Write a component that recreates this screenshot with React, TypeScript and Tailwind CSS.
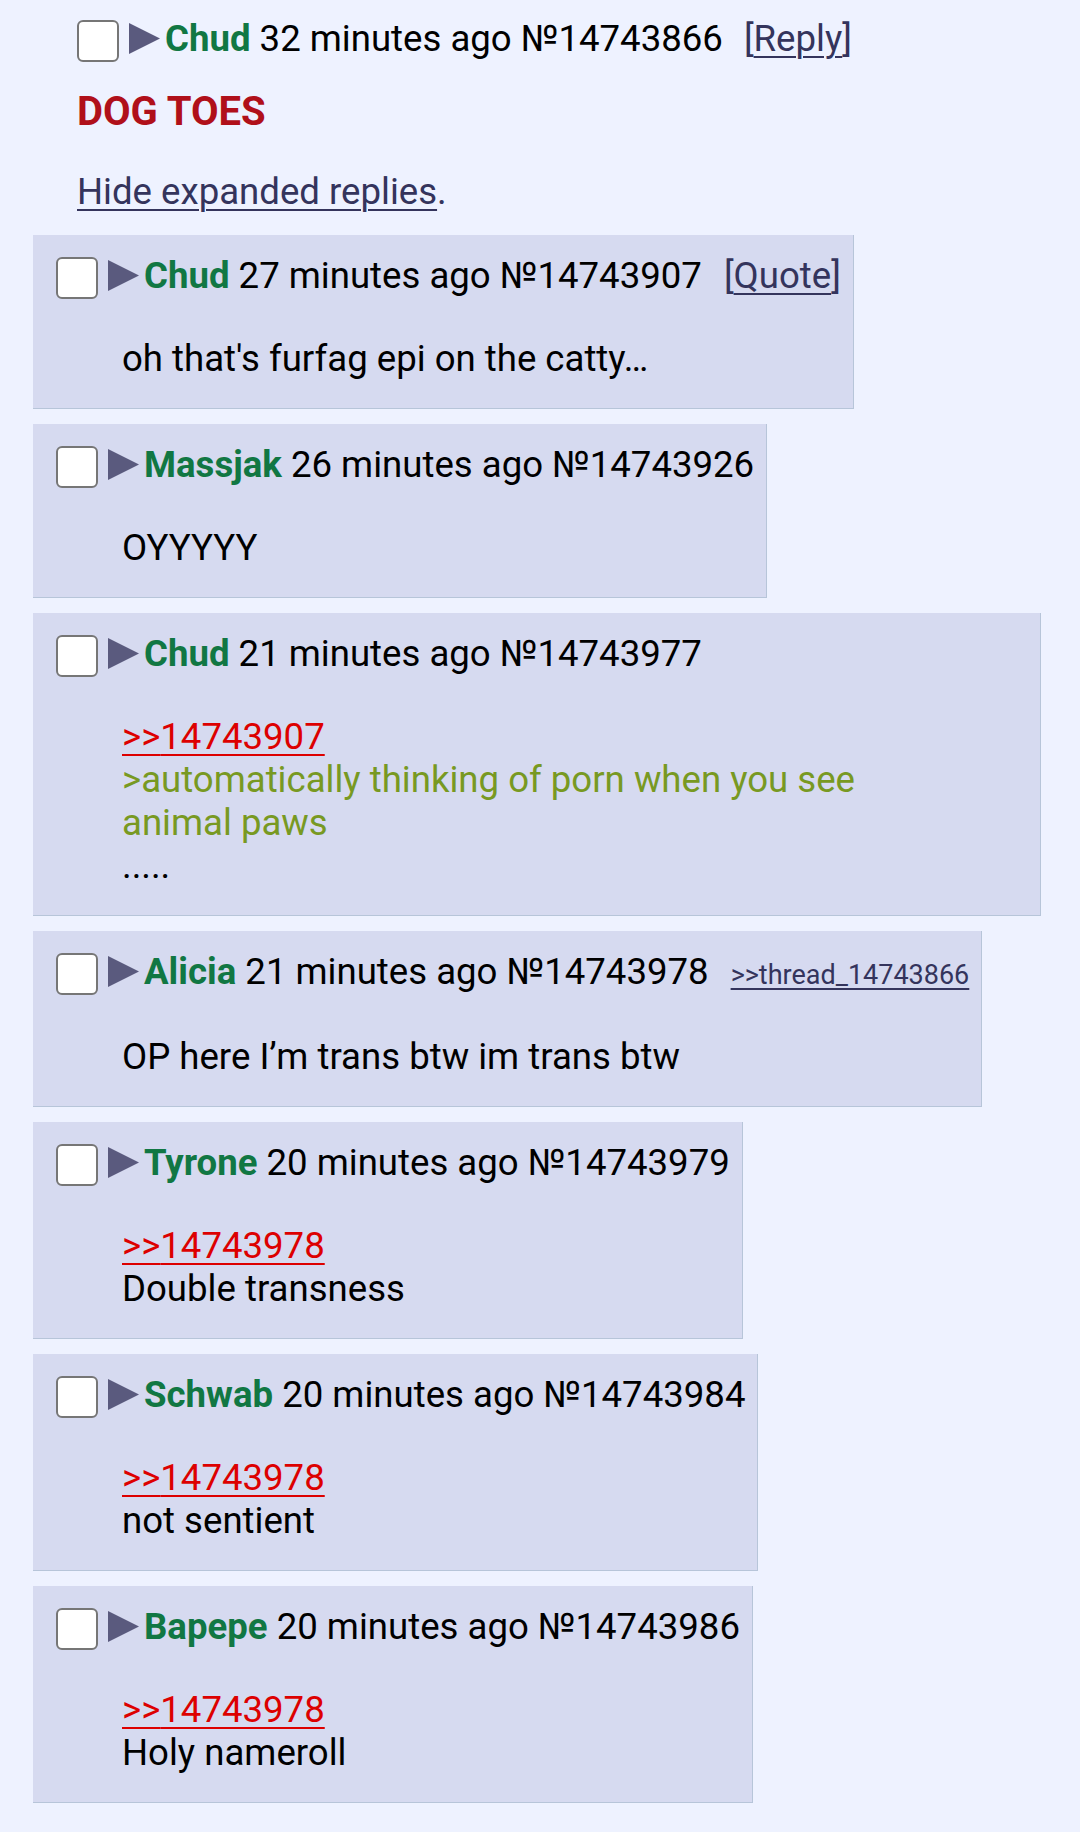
import type { ReactNode } from "react";

type Post = {
  name: string;
  time: string;
  no: string;
  extra?: ReactNode;
  body: ReactNode;
  width?: string;
};

const Checkbox = () => (
  <div className="mt-[3px] h-[42px] w-[42px] shrink-0 rounded-[6px] border-2 border-[#767676] bg-white" />
);

const Arrow = () => (
  <svg className="ml-[10px] mt-[6px] shrink-0" width="31" height="31" viewBox="0 0 31 31">
    <polygon points="0,0 31,15.5 0,31" fill="#5a5a7e" />
  </svg>
);

const Quote = ({ to }: { to: string }) => (
  <div>
    <span className="text-[#d00] underline decoration-2 underline-offset-[5px]">&gt;&gt;{to}</span>
  </div>
);

function Header({ name, time, no, extra }: { name: string; time: string; no: string; extra?: ReactNode }) {
  return (
    <div className="flex items-start">
      <Checkbox />
      <Arrow />
      <div className="ml-[5px] whitespace-nowrap leading-[43px]">
        <span className="font-bold text-[#117743]">{name}</span> {time} №{no}
        {extra}
      </div>
    </div>
  );
}

const posts: Post[] = [
  {
    name: "Chud",
    time: "27 minutes ago",
    no: "14743907",
    extra: (
      <span className="ml-[22px] text-[#34345c]">
        [<span className="underline decoration-2 underline-offset-[5px]">Quote</span>]
      </span>
    ),
    body: <div>oh that's furfag epi on the catty…</div>,
  },
  { name: "Massjak", time: "26 minutes ago", no: "14743926", body: <div>OYYYYY</div> },
  {
    name: "Chud",
    time: "21 minutes ago",
    no: "14743977",
    width: "w-[1008px]",
    body: (
      <>
        <Quote to="14743907" />
        <div className="text-[#789922]">
          &gt;automatically thinking of porn when you see
          <br />
          animal paws
        </div>
        <div>.....</div>
      </>
    ),
  },
  {
    name: "Alicia",
    time: "21 minutes ago",
    no: "14743978",
    extra: (
      <span className="ml-[22px] text-[27px] text-[#34345c] underline underline-offset-[4px]">&gt;&gt;thread_14743866</span>
    ),
    body: <div>OP here I’m trans btw im trans btw</div>,
  },
  {
    name: "Tyrone",
    time: "20 minutes ago",
    no: "14743979",
    body: (
      <>
        <Quote to="14743978" />
        <div>Double transness</div>
      </>
    ),
  },
  {
    name: "Schwab",
    time: "20 minutes ago",
    no: "14743984",
    body: (
      <>
        <Quote to="14743978" />
        <div>not sentient</div>
      </>
    ),
  },
  {
    name: "Bapepe",
    time: "20 minutes ago",
    no: "14743986",
    body: (
      <>
        <Quote to="14743978" />
        <div>Holy nameroll</div>
      </>
    ),
  },
];

export default function App() {
  return (
    <div className="min-h-[1832px] w-[1080px] bg-[#eef2ff] text-[36.6px] leading-[43px] text-black [font-family:Roboto,'Noto_Sans',sans-serif]">
      {/* OP */}
      <div className="pl-[77px] pt-[17px]">
        <Header
          name="Chud"
          time="32 minutes ago"
          no="14743866"
          extra={
            <span className="ml-[21px] text-[#34345c]">
              [<span className="underline decoration-2 underline-offset-[5px]">Reply</span>]
            </span>
          }
        />
        <div className="mt-[28px] text-[40px] font-bold text-[#b0101a]">DOG TOES</div>
        <div className="mt-[37px] text-[#34345c]">
          <span className="underline decoration-2 underline-offset-[5px]">Hide expanded replies</span>.
        </div>
      </div>

      {/* Replies */}
      <div className="mt-[22px] flex flex-col items-start gap-[15px] pl-[33px]">
        {posts.map((p, i) => (
          <div
            key={i}
            className={`${p.width ?? "w-fit"} border-r border-b border-[#b7c5d9] bg-[#d6daf0] pt-[19px] pr-[12px] pb-[28px] pl-[23px]`}
          >
            <Header name={p.name} time={p.time} no={p.no} extra={p.extra} />
            <div className="mt-[38px] pl-[66px]">{p.body}</div>
          </div>
        ))}
      </div>
    </div>
  );
}
